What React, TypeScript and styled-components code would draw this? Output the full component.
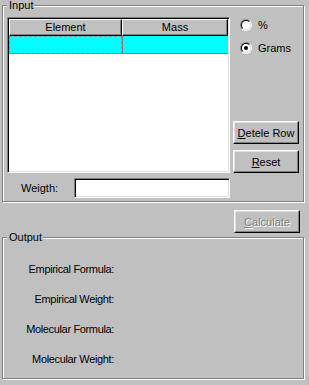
import React from 'react';
import styled, { createGlobalStyle } from 'styled-components';

const GlobalStyle = createGlobalStyle`
    body {
        margin: 0;
        background: #c0c0c0;
        font-family: 'Liberation Sans', Arial, sans-serif;
        font-size: 11px;
        color: #000;
    }
`;

const Window = styled.div`
    background: #c0c0c0;
    box-sizing: border-box;
    display: flex;
    flex-direction: column;
    height: 385px;
    padding-left: 2px;
    width: 309px;
`;

const Group = styled.section<{ $top: number; $height: number }>`
    border: 1px solid #808080;
    box-shadow: inset 1px 1px 0 #fff, 1px 1px 0 #fff;
    box-sizing: border-box;
    height: ${props => props.$height}px;
    margin-top: ${props => props.$top}px;
    position: relative;
    width: 302px;
`;

const GroupTitle = styled.span`
    background: #c0c0c0;
    left: 4px;
    line-height: 13px;
    padding: 0 1px 0 2px;
    position: absolute;
    top: -7px;
`;

const InputBody = styled.div`
    display: grid;
    grid-template-columns: 223px 1fr;
    column-gap: 3px;
    padding: 11px 0 0 4px;
`;

const ListView = styled.div`
    background: #fff;
    border: 1px solid;
    border-color: #808080 #fff #fff #808080;
    box-shadow: inset 1px 1px 0 #000, inset -1px -1px 0 #dfdfdf;
    box-sizing: border-box;
    height: 156px;
    padding: 1px;
`;

const ListRow = styled.div`
    display: grid;
    grid-template-columns: 113px 106px;
`;

const HeaderCell = styled.div`
    background: #c0c0c0;
    border: 1px solid;
    border-color: #fff #000 #000 #fff;
    box-shadow: inset -1px -1px 0 #808080;
    box-sizing: border-box;
    height: 17px;
    line-height: 14px;
    text-align: center;
`;

const DataCell = styled.div<{ $focused?: boolean }>`
    background: #00ffff;
    box-sizing: border-box;
    height: 18px;
    border-bottom: 1px solid #808080;
    border-left: ${props => (props.$focused ? '0' : '1px solid #808080')};
    outline: ${props => (props.$focused ? '1px dashed #909090' : 'none')};
    outline-offset: -1px;
`;

const SideColumn = styled.div`
    display: flex;
    flex-direction: column;
    height: 156px;
`;

const RadioGroup = styled.div`
    display: flex;
    flex-direction: column;
    gap: 11px;
    padding: 2px 0 0 7px;
`;

const RadioRow = styled.label`
    align-items: center;
    display: flex;
    gap: 6px;
    height: 12px;
    line-height: 13px;
`;

const RadioOuter = styled.span`
    border: 1px solid;
    border-color: #808080 #fff #fff #808080;
    border-radius: 50%;
    box-sizing: border-box;
    display: block;
    height: 12px;
    width: 12px;
`;

const RadioInner = styled.span<{ $checked: boolean }>`
    align-items: center;
    background: #fff;
    border: 1px solid;
    border-color: #000 #dfdfdf #dfdfdf #000;
    border-radius: 50%;
    box-sizing: border-box;
    display: flex;
    height: 10px;
    justify-content: center;
    width: 10px;

    &::after {
        background: #000;
        border-radius: 50%;
        content: '';
        display: ${props => (props.$checked ? 'block' : 'none')};
        height: 4px;
        width: 4px;
    }
`;

const ButtonStack = styled.div`
    display: flex;
    flex-direction: column;
    gap: 6px;
    margin-top: auto;
`;

const Button = styled.button`
    background: #c0c0c0;
    border: 1px solid;
    border-color: #fff #000 #000 #fff;
    box-shadow: inset -1px -1px 0 #808080, inset 1px 1px 0 #dfdfdf;
    box-sizing: border-box;
    color: #000;
    font-family: inherit;
    font-size: 11px;
    height: 23px;
    padding: 0;
    width: 66px;

    &:disabled {
        color: #808080;
        text-shadow: 1px 1px 0 #fff;
    }
`;

const CalculateButton = styled(Button)`
    align-self: flex-end;
    margin: 8px 9px 0 0;
`;

const WeightRow = styled.div`
    align-items: center;
    display: flex;
    margin: 5px 0 0 4px;
`;

const WeightLabel = styled.span`
    line-height: 13px;
    margin-left: 14px;
    width: 53px;
`;

const TextField = styled.div`
    background: #fff;
    border: 1px solid;
    border-color: #808080 #fff #fff #808080;
    box-shadow: inset 1px 1px 0 #000, inset -1px -1px 0 #dfdfdf;
    box-sizing: border-box;
    height: 20px;
    width: 156px;
`;

const OutputRows = styled.div`
    display: grid;
    grid-template-columns: 111px;
    padding-top: 25px;
    row-gap: 17px;
`;

const OutputLabel = styled.span`
    letter-spacing: -0.35px;
    line-height: 13px;
    text-align: right;
`;

const Radio: React.FC<{ checked: boolean; label: string }> = ({ checked, label }) => (
    <RadioRow>
        <RadioOuter>
            <RadioInner $checked={checked} />
        </RadioOuter>
        {label}
    </RadioRow>
);

const outputs = ['Empirical Formula:', 'Empirical Weight:', 'Molecular Formula:', 'Molecular Weight:'];

const App: React.FC = () => (
    <>
        <GlobalStyle />
        <Window>
            <Group $top={5} $height={197}>
                <GroupTitle>Input</GroupTitle>
                <InputBody>
                    <ListView>
                        <ListRow>
                            <HeaderCell>Element</HeaderCell>
                            <HeaderCell>Mass</HeaderCell>
                        </ListRow>
                        <ListRow>
                            <DataCell $focused />
                            <DataCell />
                        </ListRow>
                    </ListView>
                    <SideColumn>
                        <RadioGroup>
                            <Radio checked={false} label="%" />
                            <Radio checked label="Grams" />
                        </RadioGroup>
                        <ButtonStack>
                            <Button>
                                <u>D</u>etele Row
                            </Button>
                            <Button>
                                <u>R</u>eset
                            </Button>
                        </ButtonStack>
                    </SideColumn>
                </InputBody>
                <WeightRow>
                    <WeightLabel>Weigth:</WeightLabel>
                    <TextField />
                </WeightRow>
            </Group>
            <CalculateButton disabled>
                <u>C</u>alculate
            </CalculateButton>
            <Group $top={4} $height={142}>
                <GroupTitle>Output</GroupTitle>
                <OutputRows>
                    {outputs.map(text => (
                        <OutputLabel key={text}>{text}</OutputLabel>
                    ))}
                </OutputRows>
            </Group>
        </Window>
    </>
);

export default App;
